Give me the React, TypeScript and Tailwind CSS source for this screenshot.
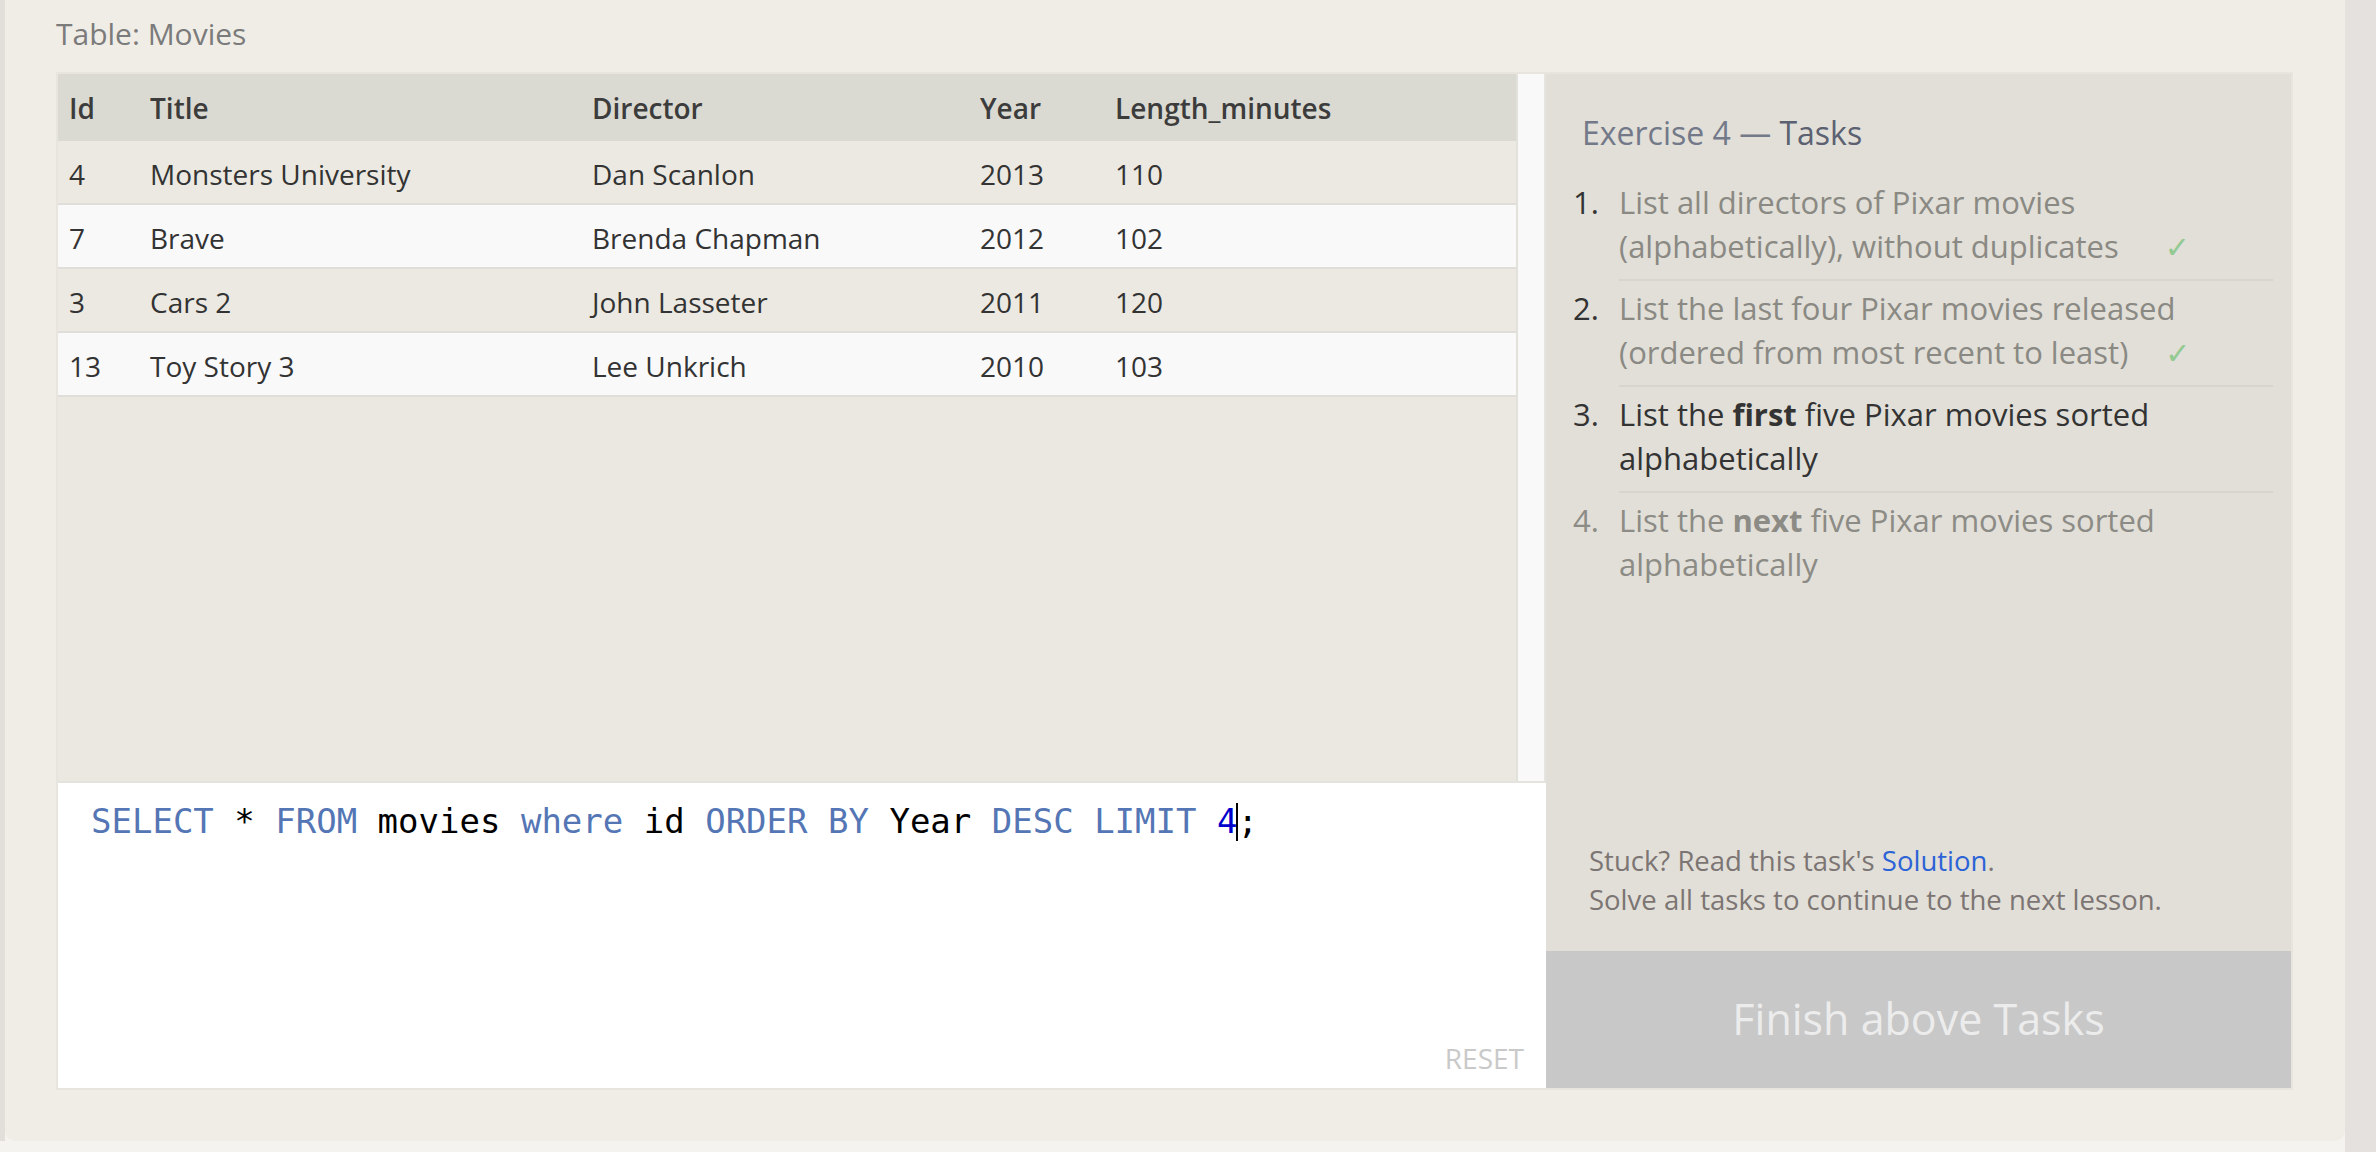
import React from "react";

const rows = [
  { id: "4", title: "Monsters University", director: "Dan Scanlon", year: "2013", len: "110" },
  { id: "7", title: "Brave", director: "Brenda Chapman", year: "2012", len: "102" },
  { id: "3", title: "Cars 2", director: "John Lasseter", year: "2011", len: "120" },
  { id: "13", title: "Toy Story 3", director: "Lee Unkrich", year: "2010", len: "103" },
];

const sans = "font-['Open_Sans',sans-serif]";

function Check({ wide }: { wide?: boolean }) {
  return (
    <span
      className={`${wide ? "ml-[46px]" : "ml-[37px]"} font-['DejaVu_Sans',sans-serif] text-[#92ca92] text-[30px] leading-[30px]`}
    >
      ✓
    </span>
  );
}

export default function App() {
  return (
    <div className={`flex w-[2376px] h-[1152px] overflow-hidden bg-[#f4f3ef] ${sans}`}>
      <div className="w-[5px] h-[1141px] bg-[#e2dfdb]" />
      <div className="w-[2340px] h-[1141px] bg-[#f0ede6] rounded-b-[10px] pl-[51px] pr-[52px] pt-[13px]">
        <div className="text-[30px] leading-[42px] text-[#7b7b7b]">Table: Movies</div>
        <div className="mt-[17px] flex border-2 border-[#e7e5de] h-[1018px]">
          {/* Left column */}
          <div className="w-[1488px] flex flex-col">
            <div className="h-[707px] flex">
              <div className="w-[1458px] bg-[#eae8e1] text-[28px] text-[#333333]">
                <div className="grid grid-cols-[81px_442px_388px_135px_1fr] h-[67px] items-center bg-[#dbdad2] font-semibold text-[#3c3c3c]">
                  <div className="pl-[11px]">Id</div>
                  <div className="pl-[11px]">Title</div>
                  <div className="pl-[11px]">Director</div>
                  <div className="pl-[11px]">Year</div>
                  <div className="pl-[11px]">Length_minutes</div>
                </div>
                {rows.map((r, i) => (
                  <div
                    key={r.id}
                    className={`grid grid-cols-[81px_442px_388px_135px_1fr] h-[64px] pt-[3px] items-center border-b-2 border-[#e0ded8] ${
                      i % 2 === 0 ? "bg-[#ebe9e2]" : "bg-[#f9f9f9]"
                    }`}
                  >
                    <div className="pl-[11px]">{r.id}</div>
                    <div className="pl-[11px]">{r.title}</div>
                    <div className="pl-[11px]">{r.director}</div>
                    <div className="pl-[11px]">{r.year}</div>
                    <div className="pl-[11px]">{r.len}</div>
                  </div>
                ))}
              </div>
              <div className="w-[30px] bg-[#f9f9f9] border-l-2 border-r-2 border-l-[#e3e1db] border-r-[#e6e4de]" />
            </div>
            <div className="flex-1 bg-white border-t-2 border-[#e5e3dd] flex flex-col pl-[33px] pr-[22px] pt-[13px] pb-[12px]">
              <div className="font-['DejaVu_Sans_Mono',monospace] text-[34px] leading-[51px] text-black whitespace-pre flex items-center">
                <span>
                  <span className="text-[#5576b5]">SELECT</span> * <span className="text-[#5576b5]">FROM</span> movies{" "}
                  <span className="text-[#5576b5]">where</span> id <span className="text-[#5576b5]">ORDER BY</span> Year{" "}
                  <span className="text-[#5576b5]">DESC LIMIT</span> <span className="text-[#0000cc]">4</span>
                </span>
                <span className="inline-block w-[2px] h-[38px] bg-black -mx-[1px]" />
                <span>;</span>
              </div>
              <div className="flex-1" />
              <div className="self-end text-[28px] leading-[36px] text-[#c9c9c9]">RESET</div>
            </div>
          </div>
          {/* Right column */}
          <div className="w-[745px] bg-[#e1dfd8] flex flex-col">
            <div className="pt-[37px] pl-[36px] text-[32px] leading-[44px]">
              <span className="text-[#737989]">Exercise 4 — </span>
              <span className="text-[#5b6171]">Tasks</span>
            </div>
            <div className="mt-[20px] pl-[27px] pr-[18px] text-[31px] leading-[44px]">
              <div className="flex">
                <div className="w-[46px] pt-[5px] text-[#333333]">1.</div>
                <div className="flex-1 pt-[5px] pb-[11px] border-b-2 border-[#d7d5cc] text-[#8a8983]">
                  List all directors of Pixar movies
                  <br />
                  (alphabetically), without duplicates
                  <Check wide />
                </div>
              </div>
              <div className="flex">
                <div className="w-[46px] pt-[5px] text-[#333333]">2.</div>
                <div className="flex-1 pt-[5px] pb-[11px] border-b-2 border-[#d7d5cc] text-[#8a8983]">
                  List the last four Pixar movies released
                  <br />
                  (ordered from most recent to least)
                  <Check />
                </div>
              </div>
              <div className="flex">
                <div className="w-[46px] pt-[5px] text-[#333333]">3.</div>
                <div className="flex-1 pt-[5px] pb-[11px] border-b-2 border-[#d7d5cc] text-[#333333]">
                  List the <b className="font-bold">first</b> five Pixar movies sorted
                  <br />
                  alphabetically
                </div>
              </div>
              <div className="flex">
                <div className="w-[46px] pt-[5px] text-[#8c8b85]">4.</div>
                <div className="flex-1 pt-[5px] text-[#8c8b85]">
                  List the <b className="font-bold">next</b> five Pixar movies sorted
                  <br />
                  alphabetically
                </div>
              </div>
            </div>
            <div className="flex-1" />
            <div className="pl-[43px] text-[27.5px] leading-[39px] text-[#7c7573] mb-[32px]">
              <div>
                Stuck? Read this task's <span className="text-[#2c63d6]">Solution</span>.
              </div>
              <div>Solve all tasks to continue to the next lesson.</div>
            </div>
            <div className="h-[137px] bg-[#c8c8c8] flex items-center justify-center text-[43px] text-[#ececec]">
              Finish above Tasks
            </div>
          </div>
        </div>
      </div>
      <div className="flex-1 h-[1152px] bg-[#e4e1de]" />
    </div>
  );
}
